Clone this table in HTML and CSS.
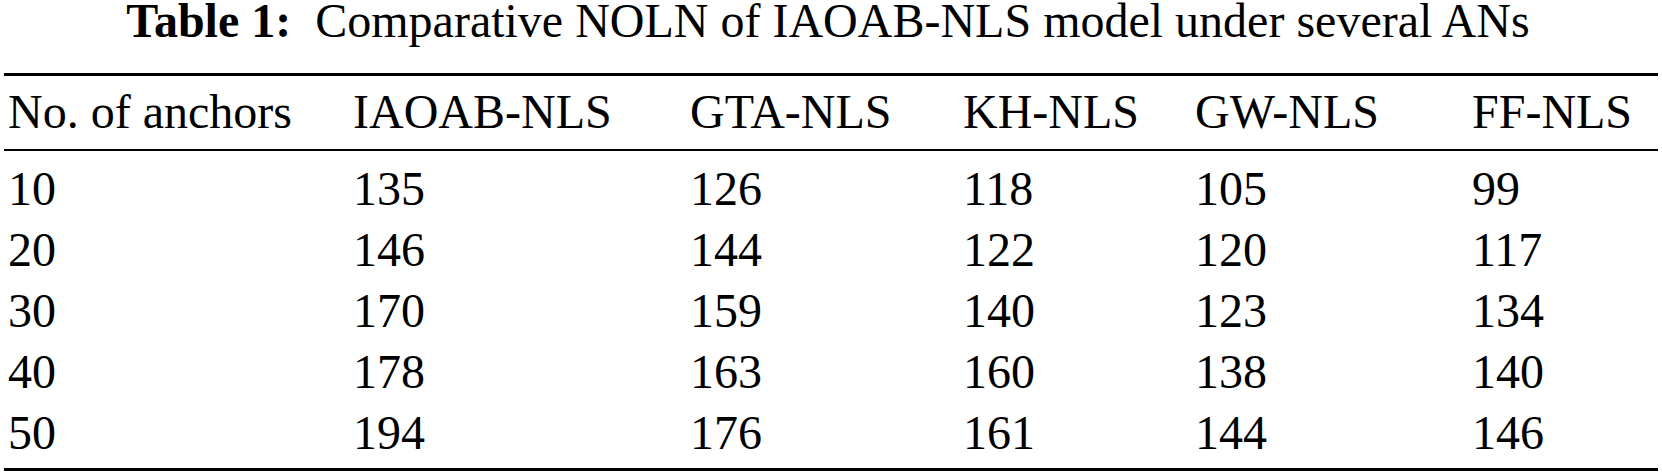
FILE: index.html
```html
<!DOCTYPE html>
<html lang="en">
<head>
    <meta charset="UTF-8">
    <title>Table 1</title>
    <link rel="stylesheet" href="styles.css">
</head>
<body>

    <div class="caption"><b>Table 1:</b> Comparative NOLN of IAOAB-NLS model under several ANs</div>

    <table class="results">
        <colgroup>
            <col class="c1">
            <col class="c2">
            <col class="c3">
            <col class="c4">
            <col class="c5">
            <col class="c6">
        </colgroup>
        <thead>
            <tr>
                <th>No. of anchors</th>
                <th>IAOAB-NLS</th>
                <th>GTA-NLS</th>
                <th>KH-NLS</th>
                <th>GW-NLS</th>
                <th>FF-NLS</th>
            </tr>
        </thead>
        <tbody>
            <tr><td>10</td><td>135</td><td>126</td><td>118</td><td>105</td><td>99</td></tr>
            <tr><td>20</td><td>146</td><td>144</td><td>122</td><td>120</td><td>117</td></tr>
            <tr><td>30</td><td>170</td><td>159</td><td>140</td><td>123</td><td>134</td></tr>
            <tr><td>40</td><td>178</td><td>163</td><td>160</td><td>138</td><td>140</td></tr>
            <tr><td>50</td><td>194</td><td>176</td><td>161</td><td>144</td><td>146</td></tr>
        </tbody>
    </table>

</body>
</html>
```

FILE: styles.css
```css
body {
    font-family: "Liberation Serif", "Times New Roman", serif;
    font-size: 48px;
    color: #000;
    background: #fff;
    margin: 0;
    padding: 1px 4px 0 4px;
}

.caption {
    line-height: 40px;
    text-align: center;
    white-space: nowrap;
    margin-left: -6px;
}

.caption b {
    margin-right: 12px;
}

.results {
    width: 1654px;
    table-layout: fixed;
    border-collapse: collapse;
    margin-top: 32px;
    border-top: 3px solid #000;
    border-bottom: 3px solid #000;
}

.c1 { width: 345px; }
.c2 { width: 337px; }
.c3 { width: 273px; }
.c4 { width: 232px; }
.c5 { width: 277px; }
.c6 { width: 190px; }

.results th,
.results td {
    font-weight: normal;
    text-align: left;
    line-height: 61px;
    padding: 0 0 0 4px;
    white-space: nowrap;
}

.results thead th {
    padding-top: 5px;
    padding-bottom: 7px;
    border-bottom: 2px solid #000;
}

.results tbody tr:first-child td {
    padding-top: 7px;
}

.results tbody tr:last-child td {
    padding-bottom: 5px;
}
```
